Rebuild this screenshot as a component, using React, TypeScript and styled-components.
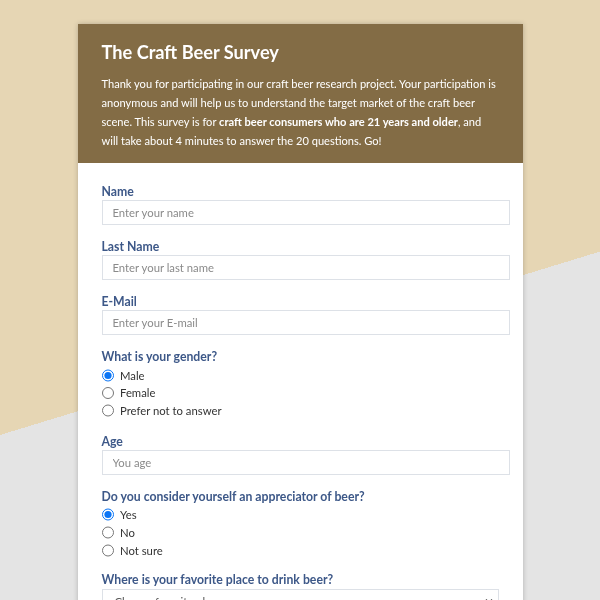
import React from "react";
import styled, { createGlobalStyle } from "styled-components";

const Global = createGlobalStyle`
  html, body { margin: 0; padding: 0; }
  body {
    font-family: Lato, "Open Sans", sans-serif;
    -webkit-font-smoothing: antialiased;
  }
  * { box-sizing: border-box; }
`;

const Backdrop = styled.div`
  position: fixed;
  inset: 0;
  z-index: 0;
  background: linear-gradient(163deg, #e6d6b4 416px, #e4e4e4 416px);
`;

const Page = styled.div`
  position: relative;
  z-index: 1;
  display: flex;
  justify-content: center;
  padding: 24px 0 40px;
`;

const Card = styled.div`
  width: 445px;
  background: #ffffff;
  box-shadow: 0 0 5px rgba(0, 0, 0, 0.22);
`;

const Header = styled.header`
  background: #836c45;
  color: #ffffff;
  padding: 16px 24px 13.5px;
`;

const Title = styled.h1`
  margin: 0 0 9.5px;
  font-size: 18.2px;
  line-height: 24px;
  font-weight: 700;
`;

const Intro = styled.p`
  margin: 0;
  font-size: 11.1px;
  line-height: 19px;
  font-weight: 400;
  strong { font-weight: 700; }
`;

const Body = styled.form`
  padding: 19.5px 24px 0;
`;

const Field = styled.div<{ $gap?: number }>`
  margin-bottom: ${(p) => p.$gap ?? 12.5}px;
`;

const Label = styled.label`
  display: block;
  color: #3d5888;
  font-size: 12.25px;
  font-weight: 700;
  line-height: 17px;
  margin-bottom: 0.5px;
`;

const TextInput = styled.input`
  display: block;
  width: calc(100% + 11px);
  height: 25px;
  border: 1px solid #dde1e7;
  border-radius: 0;
  padding: 0 10px;
  font-family: Lato, sans-serif;
  font-size: 11.3px;
  color: #333;
  background: #fff;
  outline: none;
  &::placeholder { color: #8a8a8a; }
`;

const Options = styled.div<{ $top: number }>`
  display: flex;
  flex-direction: column;
  padding-top: ${(p) => p.$top}px;
`;

const Option = styled.label<{ $h: number }>`
  display: flex;
  align-items: center;
  height: ${(p) => p.$h}px;
  font-size: 11.3px;
  color: #333;
`;

const Radio = styled.input`
  width: 12.5px;
  height: 12.5px;
  margin: 0 6px 0 0;
  accent-color: #0b75f5;
`;

const SelectWrap = styled.div`
  position: relative;
`;

const Select = styled.select`
  display: block;
  width: 100%;
  height: 25px;
  appearance: none;
  border: 1px solid #dde1e7;
  border-radius: 0;
  padding: 0 10px 0 12px;
  font-family: Lato, sans-serif;
  font-size: 11.3px;
  color: #555;
  background: #fff;
`;

const Chevron = styled.svg`
  position: absolute;
  right: 6px;
  top: 9px;
  width: 8px;
  height: 6px;
  pointer-events: none;
`;

type Q = { name: string; label: string; opts: string[]; h: number; top: number; gap: number };

const RadioField: React.FC<Q> = ({ name, label, opts, h, top, gap }) => (
  <Field $gap={gap}>
    <Label as="div">{label}</Label>
    <Options $top={top}>
      {opts.map((o, i) => (
        <Option key={o} $h={h}>
          <Radio type="radio" name={name} defaultChecked={i === 0} />
          {o}
        </Option>
      ))}
    </Options>
  </Field>
);

export default function App() {
  return (
    <>
      <Global />
      <Backdrop />
      <Page>
        <Card>
          <Header>
            <Title>The Craft Beer Survey</Title>
            <Intro>
              Thank you for participating in our craft beer research project. Your participation is
              anonymous and will help us to understand the target market of the craft beer scene.
              This survey is for <strong>craft beer consumers who are 21 years and older</strong>, and
              will take about 4 minutes to answer the 20 questions. Go!
            </Intro>
          </Header>
          <Body onSubmit={(e) => e.preventDefault()}>
            <Field>
              <Label htmlFor="name">Name</Label>
              <TextInput id="name" placeholder="Enter your name" />
            </Field>
            <Field>
              <Label htmlFor="last">Last Name</Label>
              <TextInput id="last" placeholder="Enter your last name" />
            </Field>
            <Field>
              <Label htmlFor="mail">E-Mail</Label>
              <TextInput id="mail" placeholder="Enter your E-mail" />
            </Field>
            <RadioField
              name="gender"
              label="What is your gender?"
              opts={["Male", "Female", "Prefer not to answer"]}
              h={17.6}
              top={1.5}
              gap={13.5}
            />
            <Field>
              <Label htmlFor="age">Age</Label>
              <TextInput id="age" placeholder="You age" />
            </Field>
            <RadioField
              name="appreciator"
              label="Do you consider yourself an appreciator of beer?"
              opts={["Yes", "No", "Not sure"]}
              h={17.9}
              top={0.5}
              gap={12}
            />
            <Field>
              <Label htmlFor="place">Where is your favorite place to drink beer?</Label>
              <SelectWrap>
                <Select id="place" defaultValue="">
                  <option value="">Choose favorite place</option>
                  <option>Bar</option>
                  <option>Home</option>
                  <option>Brewery</option>
                </Select>
                <Chevron viewBox="0 0 8 6">
                  <path d="M1 1.5 L4 4.5 L7 1.5" fill="none" stroke="#444" strokeWidth="1.2" />
                </Chevron>
              </SelectWrap>
            </Field>
          </Body>
        </Card>
      </Page>
    </>
  );
}
